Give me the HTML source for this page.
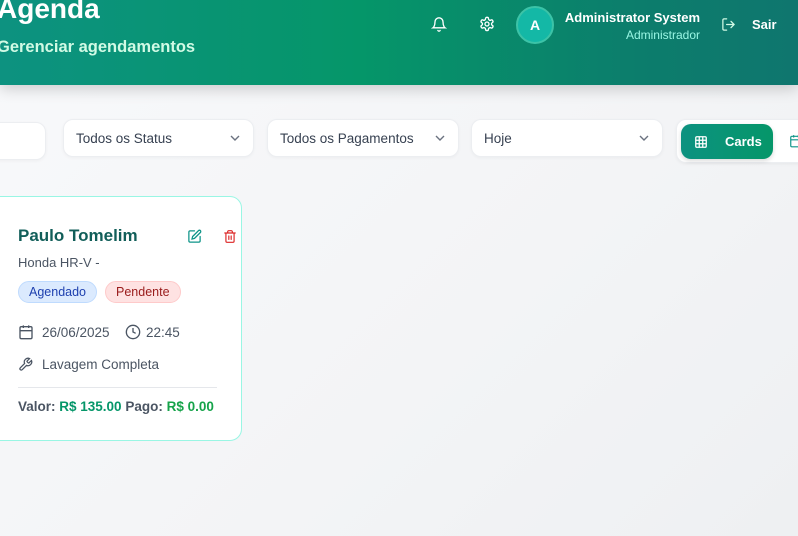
<!DOCTYPE html>
<html><head><meta charset="utf-8"><style>
*{box-sizing:border-box;margin:0;padding:0}
body{width:798px;height:536px;overflow:hidden;font-family:"Liberation Sans",sans-serif;background:linear-gradient(135deg,#f8f9fb,#f3f4f6 60%,#eef0f2);position:relative}
.hdr{position:absolute;left:0;top:0;width:798px;height:85px;background:linear-gradient(90deg,#0d9280 0%,#059669 45%,#0c7d6c 80%,#0f766e 100%);box-shadow:0 4px 14px rgba(0,0,0,.18)}
.t1{position:absolute;left:-3px;top:-7px;color:#fff;font-size:28px;font-weight:bold}
.t2{position:absolute;left:-3px;top:38px;color:#d1fae5;font-size:16.5px;font-weight:bold}
.av{position:absolute;left:516px;top:6px;width:38px;height:38px;border-radius:50%;background:#14b8a6;border:2px solid #3cc3a7;color:#fff;font-weight:bold;font-size:14px;text-align:center;line-height:34px}
.nm{position:absolute;right:98px;top:10px;color:#fff;font-weight:bold;font-size:13px}
.rl{position:absolute;right:98px;top:28px;color:#99f6e4;font-size:12px}
.sair{position:absolute;left:752px;top:17px;color:#fff;font-weight:bold;font-size:13px}
.sel{position:absolute;top:119px;height:38px;background:#fff;border:1px solid #eceef1;border-radius:10px;font-size:13.5px;color:#374151;padding:11px 12px;box-shadow:0 1px 3px rgba(0,0,0,.04)}
.sel svg{position:absolute;right:12px;top:14px}
.tog{position:absolute;left:676px;top:119px;width:140px;height:44px;background:#fff;border:1px solid #eceef1;border-radius:10px;box-shadow:0 1px 3px rgba(0,0,0,.05)}
.btn{position:absolute;left:4px;top:4px;width:92px;height:35px;border-radius:10px;background:linear-gradient(90deg,#0d9280,#059669);color:#fff;font-weight:bold;font-size:13px;box-shadow:0 2px 5px rgba(0,0,0,.15)}
.card{position:absolute;left:-12px;top:196px;width:254px;height:245px;background:#fff;border:1px solid #99f6e4;border-radius:12px}
.pn{position:absolute;left:18px;top:226px;font-size:17px;font-weight:bold;color:#115e59}
.car{position:absolute;left:18px;top:255px;font-size:13px;color:#4b5563}
.b{position:absolute;top:281px;height:22px;border-radius:11px;font-size:12.5px;line-height:20px;padding:0 10px}
.tx{position:absolute;font-size:13px;color:#4b5563}
</style></head><body>
<div class="hdr">
<div class="t1">Agenda</div>
<div class="t2">Gerenciar agendamentos</div>
<svg style="position:absolute;left:431px;top:16px" width="16" height="17" viewBox="0 0 24 24" fill="none" stroke="#fff" stroke-width="2" stroke-linecap="round"><path d="M6 8a6 6 0 0 1 12 0c0 7 3 9 3 9H3s3-2 3-9"/><path d="M10.3 21a1.9 1.9 0 0 0 3.4 0"/></svg>
<svg style="position:absolute;left:479px;top:16px" width="16" height="16" viewBox="0 0 24 24" fill="none" stroke="#fff" stroke-width="2"><circle cx="12" cy="12" r="3"/><path d="M12.2 2h-.4a2 2 0 0 0-2 2v.2a2 2 0 0 1-1 1.7l-.4.3a2 2 0 0 1-2 0l-.2-.1a2 2 0 0 0-2.7.7l-.2.4a2 2 0 0 0 .7 2.7l.2.1a2 2 0 0 1 1 1.7v.5a2 2 0 0 1-1 1.7l-.2.1a2 2 0 0 0-.7 2.7l.2.4a2 2 0 0 0 2.7.7l.2-.1a2 2 0 0 1 2 0l.4.3a2 2 0 0 1 1 1.7v.2a2 2 0 0 0 2 2h.4a2 2 0 0 0 2-2v-.2a2 2 0 0 1 1-1.7l.4-.3a2 2 0 0 1 2 0l.2.1a2 2 0 0 0 2.7-.7l.2-.4a2 2 0 0 0-.7-2.7l-.2-.1a2 2 0 0 1-1-1.7v-.5a2 2 0 0 1 1-1.7l.2-.1a2 2 0 0 0 .7-2.7l-.2-.4a2 2 0 0 0-2.7-.7l-.2.1a2 2 0 0 1-2 0l-.4-.3a2 2 0 0 1-1-1.7V4a2 2 0 0 0-2-2z"/></svg>
<div class="av">A</div>
<div class="nm">Administrator System</div>
<div class="rl">Administrador</div>
<svg style="position:absolute;left:721px;top:17px" width="15" height="15" viewBox="0 0 24 24" fill="none" stroke="#d1fae5" stroke-width="2" stroke-linecap="round"><path d="M9 21H5a2 2 0 0 1-2-2V5a2 2 0 0 1 2-2h4"/><path d="M16 17l5-5-5-5M21 12H9"/></svg>
<div class="sair">Sair</div>
</div>
<div class="sel" style="left:-10px;width:56px;top:122px"></div>
<div class="sel" style="left:63px;width:191px">Todos os Status<svg width="12" height="8" viewBox="0 0 12 8" fill="none" stroke="#6b7280" stroke-width="1.4"><path d="M2 2l4 4 4-4"/></svg></div>
<div class="sel" style="left:267px;width:192px">Todos os Pagamentos<svg width="12" height="8" viewBox="0 0 12 8" fill="none" stroke="#6b7280" stroke-width="1.4"><path d="M2 2l4 4 4-4"/></svg></div>
<div class="sel" style="left:471px;width:192px">Hoje<svg width="12" height="8" viewBox="0 0 12 8" fill="none" stroke="#6b7280" stroke-width="1.4"><path d="M2 2l4 4 4-4"/></svg></div>
<div class="tog"><div class="btn">
<svg style="position:absolute;left:13px;top:11px" width="14" height="14" viewBox="0 0 24 24" fill="none" stroke="#fff" stroke-width="2.2"><rect x="3" y="3" width="18" height="18" rx="2"/><path d="M3 9h18M3 15h18M9 3v18M15 3v18"/></svg>
<span style="position:absolute;left:44px;top:10px">Cards</span></div>
<svg style="position:absolute;left:112px;top:13px" width="14" height="16" viewBox="0 0 24 24" fill="none" stroke="#0d9488" stroke-width="2"><rect x="3" y="4" width="18" height="18" rx="2"/><path d="M16 2v4M8 2v4M3 10h18"/></svg>
</div>
<div class="card"></div>
<div class="pn">Paulo Tomelim</div>
<svg style="position:absolute;left:187px;top:229px" width="15" height="15" viewBox="0 0 24 24" fill="none" stroke="#0d9488" stroke-width="2" stroke-linecap="round"><path d="M12 3H5a2 2 0 0 0-2 2v14a2 2 0 0 0 2 2h14a2 2 0 0 0 2-2v-7"/><path d="M18.4 2.6a2.1 2.1 0 0 1 3 3L12 15l-4 1 1-4z"/></svg>
<svg style="position:absolute;left:223px;top:229px" width="14" height="15" viewBox="0 0 24 24" fill="none" stroke="#dc2626" stroke-width="2" stroke-linecap="round"><path d="M3 6h18M19 6v14a2 2 0 0 1-2 2H7a2 2 0 0 1-2-2V6M8 6V4a2 2 0 0 1 2-2h4a2 2 0 0 1 2 2v2M10 11v6M14 11v6"/></svg>
<div class="car">Honda HR-V -</div>
<div class="b" style="left:18px;background:#dbeafe;border:1px solid #bfdbfe;color:#1e40af">Agendado</div>
<div class="b" style="left:105px;background:#fee2e2;border:1px solid #fecaca;color:#991b1b">Pendente</div>
<svg style="position:absolute;left:18px;top:324px" width="16" height="16" viewBox="0 0 24 24" fill="none" stroke="#4b5563" stroke-width="2"><rect x="3" y="4" width="18" height="18" rx="2"/><path d="M16 2v4M8 2v4M3 10h18"/></svg>
<div class="tx" style="left:42px;top:325px;font-size:13.5px">26/06/2025</div>
<svg style="position:absolute;left:125px;top:324px" width="16" height="16" viewBox="0 0 24 24" fill="none" stroke="#4b5563" stroke-width="2"><circle cx="12" cy="12" r="10"/><path d="M12 6v6l4 2"/></svg>
<div class="tx" style="left:146px;top:325px;font-size:13.5px">22:45</div>
<svg style="position:absolute;left:18px;top:357px" width="15" height="15" viewBox="0 0 24 24" fill="none" stroke="#4b5563" stroke-width="2"><path d="M14.7 6.3a1 1 0 0 0 0 1.4l1.6 1.6a1 1 0 0 0 1.4 0l3.8-3.8a6 6 0 0 1-7.9 7.9l-6.9 6.9a2.1 2.1 0 0 1-3-3l6.9-6.9a6 6 0 0 1 7.9-7.9z"/></svg>
<div class="tx" style="left:42px;top:357px;font-size:13.5px">Lavagem Completa</div>
<div style="position:absolute;left:18px;top:387px;width:199px;height:1px;background:#e5e7eb"></div>
<div class="tx" style="left:18px;top:399px;font-weight:bold;color:#4b5563;font-size:13.5px">Valor: <span style="color:#059669">R$ 135.00</span> Pago: <span style="color:#16a34a">R$ 0.00</span></div>
</body></html>
